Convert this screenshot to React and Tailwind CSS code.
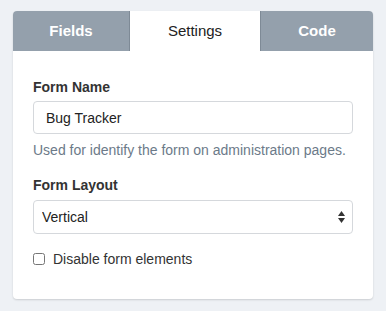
import { useState } from 'react';

export default function App() {
  const [tab, setTab] = useState('settings');
  const tabs = [
    { id: 'fields', label: 'Fields', w: 'w-[117px]' },
    { id: 'settings', label: 'Settings', w: 'w-[130px]' },
    { id: 'code', label: 'Code', w: 'flex-1' },
  ];

  return (
    <div className="min-h-[311px] bg-[#eef1f5] px-[13px] pt-[11px] font-['Helvetica_Neue','Liberation_Sans',Arial,sans-serif] text-[14px] text-[#333]">
      <div className="overflow-hidden rounded-[4px] bg-white shadow-[0_1px_2px_rgba(0,0,0,0.15)]">
        <div className="flex h-[40px]">
          {tabs.map((t, i) => (
            <button
              key={t.id}
              onClick={() => setTab(t.id)}
              className={
                t.w +
                (t.id === tab
                  ? ' bg-white text-[15px] text-[#222]'
                  : ' bg-[#94a0ac] text-[15px] font-bold text-white' +
                    (i === 0 ? ' border-r border-[#7e8a96]' : ' border-l border-[#7e8a96]'))
              }
            >
              {t.label}
            </button>
          ))}
        </div>
        <div className="px-[20px] pb-[30px] pt-[26px]">
          <label className="block text-[14px] font-bold leading-[20px] text-[#333]">Form Name</label>
          <input
            defaultValue="Bug Tracker"
            className="mt-[4px] block h-[33px] w-full rounded-[4px] border border-[#d5d8dc] px-[12px] text-[14px] text-[#222] outline-none"
          />
          <p className="mt-[6px] text-[14px] leading-[20px] text-[#6c7a89]">Used for identify the form on administration pages.</p>
          <label className="mt-[15px] block text-[14px] font-bold leading-[20px] text-[#333]">Form Layout</label>
          <div className="relative mt-[5px]">
            <select className="block h-[34px] w-full appearance-none rounded-[4px] border border-[#d5d8dc] bg-white px-[8px] text-[14px] text-[#222] outline-none">
              <option>Vertical</option>
              <option>Horizontal</option>
            </select>
            <svg className="pointer-events-none absolute right-[8px] top-[11px]" width="7" height="12" viewBox="0 0 7 12">
              <path d="M3.5 0L7 5H0z" fill="#333" />
              <path d="M3.5 12L7 7H0z" fill="#333" />
            </svg>
          </div>
          <label className="mt-[15px] flex h-[20px] items-center gap-[8px] text-[14px] text-[#333]">
            <input type="checkbox" className="h-[12px] w-[12px] rounded-[3px]" />
            Disable form elements
          </label>
        </div>
      </div>
    </div>
  );
}
